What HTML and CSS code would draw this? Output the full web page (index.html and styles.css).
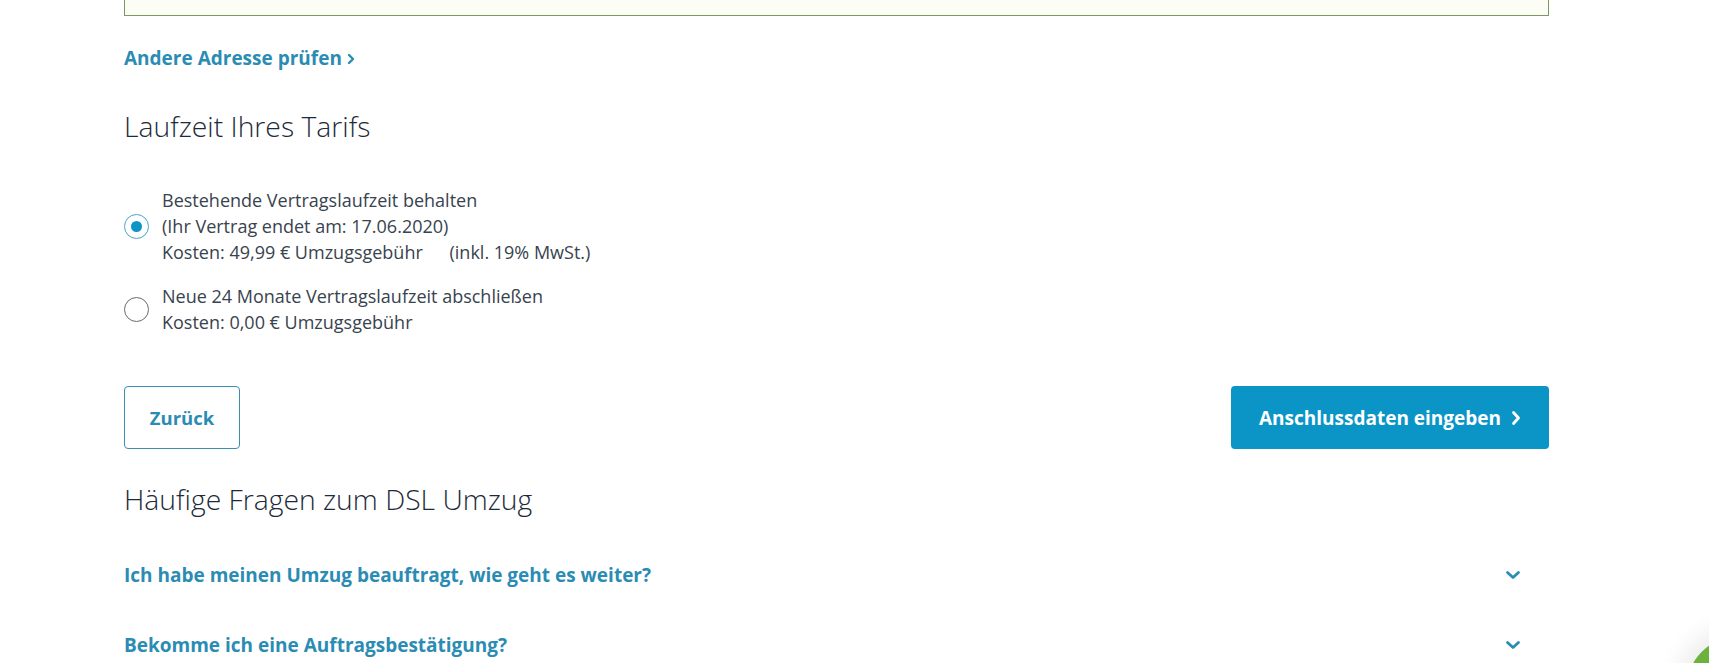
FILE: index.html
```html
<!DOCTYPE html>
<html lang="de">
<head>
<meta charset="utf-8">
<title>DSL Umzug</title>
<link rel="stylesheet" href="styles.css">
</head>
<body>
<main class="page">
  <div class="address-box"></div>

  <a class="link-more" href="#">Andere Adresse prüfen
    <svg class="link-chev" width="8" height="12" viewBox="0 0 8 12"><path d="M2 2l4 4-4 4" fill="none" stroke="currentColor" stroke-width="2.4" stroke-linecap="round" stroke-linejoin="round"/></svg>
  </a>

  <h2 class="section-title">Laufzeit Ihres Tarifs</h2>

  <div class="options">
    <label class="option">
      <span class="radio radio-checked"></span>
      <span class="option-text">Bestehende Vertragslaufzeit behalten<br>(Ihr Vertrag endet am: 17.06.2020)<br>Kosten: 49,99 € Umzugsgebühr <span class="tax">(inkl. 19% MwSt.)</span></span>
    </label>
    <label class="option">
      <span class="radio"></span>
      <span class="option-text">Neue 24 Monate Vertragslaufzeit abschließen<br>Kosten: 0,00 € Umzugsgebühr</span>
    </label>
  </div>

  <div class="actions">
    <button class="btn btn-secondary" type="button">Zurück</button>
    <button class="btn btn-primary" type="button">Anschlussdaten eingeben
      <svg class="btn-chev" width="10" height="16" viewBox="0 0 10 16"><path d="M2.5 2.5l5 5.5-5 5.5" fill="none" stroke="currentColor" stroke-width="2.8" stroke-linecap="round" stroke-linejoin="round"/></svg>
    </button>
  </div>

  <h2 class="section-title faq-title">Häufige Fragen zum DSL Umzug</h2>

  <div class="faq">
    <div class="faq-item">
      <span class="faq-q">Ich habe meinen Umzug beauftragt, wie geht es weiter?</span>
      <svg class="faq-chev" width="16" height="10" viewBox="0 0 16 10"><path d="M2.5 2.5l5.5 5 5.5-5" fill="none" stroke="currentColor" stroke-width="2.8" stroke-linecap="round" stroke-linejoin="round"/></svg>
    </div>
    <div class="faq-item">
      <span class="faq-q">Bekomme ich eine Auftragsbestätigung?</span>
      <svg class="faq-chev" width="16" height="10" viewBox="0 0 16 10"><path d="M2.5 2.5l5.5 5 5.5-5" fill="none" stroke="currentColor" stroke-width="2.8" stroke-linecap="round" stroke-linejoin="round"/></svg>
    </div>
  </div>
</main>
<div class="chat-bubble"></div>
</body>
</html>
```

FILE: styles.css
```css
* { box-sizing: border-box; }

html, body {
  margin: 0;
  padding: 0;
  background: #ffffff;
  overflow: hidden;
}

body {
  font-family: "Open Sans", "Noto Sans", "Liberation Sans", sans-serif;
  color: #333d47;
  height: 663px;
}

.page {
  width: 1425px;
  margin-left: 124px;
  display: flex;
  flex-direction: column;
  align-items: flex-start;
}

.address-box {
  width: 100%;
  height: 16px;
  background: #fcfef5;
  border: 1px solid #7f9863;
  border-top: none;
}

.link-more {
  margin-top: 30px;
  display: inline-flex;
  align-items: center;
  gap: 5px;
  height: 24px;
  font-size: 19px;
  font-weight: 700;
  color: #2b8cb3;
  text-decoration: none;
}

.link-chev { margin-top: 2px; }

.section-title {
  margin: 38px 0 0;
  font-size: 28.3px;
  font-weight: 300;
  line-height: 36px;
  color: #1c2b3a;
}

.options {
  margin-top: 43px;
  display: flex;
  flex-direction: column;
  gap: 18px;
}

.option {
  display: flex;
  align-items: center;
  gap: 13px;
}

.radio {
  width: 25px;
  height: 25px;
  border-radius: 50%;
  border: 1.5px solid #6a6a6a;
  display: flex;
  align-items: center;
  justify-content: center;
  flex-shrink: 0;
}

.radio-checked {
  border-color: #4ba5c4;
}

.radio-checked::after {
  content: "";
  width: 11px;
  height: 11px;
  border-radius: 50%;
  background: #0b95c7;
}

.option-text {
  font-size: 18px;
  line-height: 26px;
  color: #38434e;
}

.tax { margin-left: 22px; }

.actions {
  margin-top: 51px;
  width: 100%;
  display: flex;
  justify-content: space-between;
}

.btn {
  height: 63px;
  border-radius: 4px;
  font-family: inherit;
  font-weight: 700;
  cursor: pointer;
  display: inline-flex;
  align-items: center;
  justify-content: center;
}

.btn-secondary {
  width: 116px;
  font-size: 18.5px;
  background: #ffffff;
  border: 1px solid #3b8fb2;
  color: #2b8cb3;
}

.btn-primary {
  width: 318px;
  font-size: 19px;
  background: #0b95c7;
  border: none;
  color: #ffffff;
  gap: 10px;
}

.faq-title {
  margin-top: 32px;
}

.faq {
  margin-top: 23px;
  width: 100%;
  display: flex;
  flex-direction: column;
}

.faq-item {
  height: 70px;
  display: flex;
  align-items: center;
  justify-content: space-between;
  padding-right: 28px;
}

.faq-q {
  font-size: 19px;
  font-weight: 700;
  color: #2b8cb3;
}

.faq-chev { color: #2b8cb3; }

.chat-bubble {
  position: fixed;
  left: 1686px;
  top: 636px;
  width: 108px;
  height: 108px;
  border-radius: 50%;
  background: #6cb23d;
  box-shadow: 0 0 24px 10px rgba(0, 0, 0, 0.08);
}
```
